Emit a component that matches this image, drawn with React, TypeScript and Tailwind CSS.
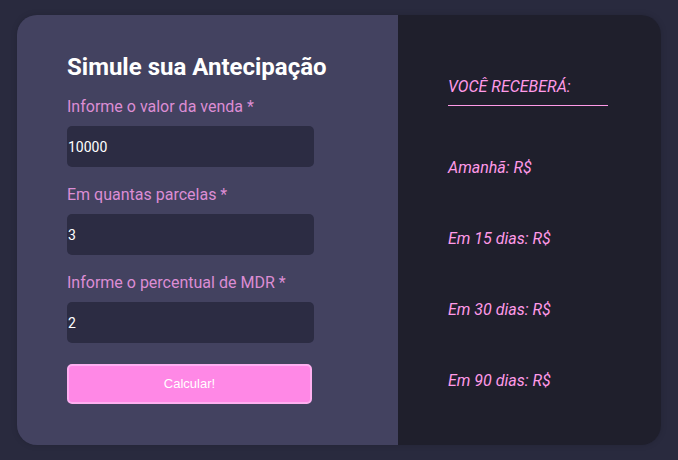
import React from 'react';

const fields = [
    { label: 'Informe o valor da venda *', value: '10000' },
    { label: 'Em quantas parcelas *', value: '3' },
    { label: 'Informe o percentual de MDR *', value: '2' },
];

const results = ['Amanhã: R$', 'Em 15 dias: R$', 'Em 30 dias: R$', 'Em 90 dias: R$'];

const App: React.FC = () => {
    return (
        <div className="min-h-[460px] bg-[#292a3e] px-[17px] py-[15px] font-['Roboto',sans-serif]">
            <div className="flex h-[430px] overflow-hidden rounded-[20px] shadow-[0_0_6px_rgba(0,0,0,0.15)]">
                {/* Formulário */}
                <div className="w-[381px] bg-[#434260] pl-[50px] pt-[34px]">
                    <h1 className="mb-[10px] text-[24px] leading-9 font-bold text-white">Simule sua Antecipação</h1>
                    <form className="flex flex-col">
                        {fields.map((f) => (
                            <div key={f.label} className="mb-4 flex flex-col">
                                <label className="mb-[7px] text-[16px] leading-6 text-[#dc8dd4]">{f.label}</label>
                                <input
                                    readOnly
                                    value={f.value}
                                    className="h-[41px] w-[247px] rounded-[5px] bg-[#2c2c43] px-px font-['Roboto',sans-serif] text-[14px] text-white outline-none"
                                />
                            </div>
                        ))}
                        <button
                            type="button"
                            className="mt-[5px] h-[40px] w-[245px] rounded-[5px] border-2 border-[#ffaff0] bg-[#ff88e6] font-['Liberation_Sans',sans-serif] text-[13px] text-white"
                        >
                            Calcular!
                        </button>
                    </form>
                </div>

                {/* Resultado */}
                <div className="flex-1 bg-[#1f1f2c] pl-[50px] pt-[60px] italic text-[#ff9ae8]">
                    <h3 className="w-[160px] border-b border-[#ff9ae8] pb-[6px] text-[16px] leading-6">VOCÊ RECEBERÁ:</h3>
                    <div className="mt-[50px] flex flex-col gap-[47px]">
                        {results.map((r) => (
                            <p key={r} className="text-[16px] leading-6">{r}</p>
                        ))}
                    </div>
                </div>
            </div>
        </div>
    );
};

export default App;
